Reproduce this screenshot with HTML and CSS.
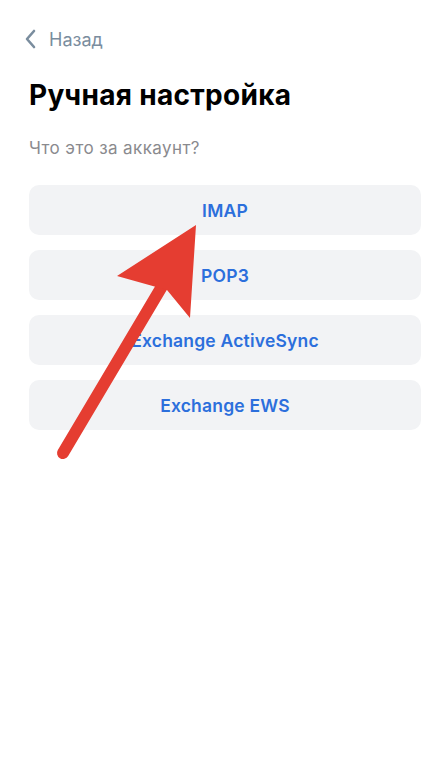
FILE: index.html
```html
<!DOCTYPE html>
<html lang="ru">
<head>
    <meta charset="UTF-8">
    <meta name="viewport" content="width=device-width, initial-scale=1.0">
    <title>Ручная настройка</title>
    <link rel="stylesheet" href="styles.css">
</head>
<body>
    <div class="screen">
        <a class="back" href="#">
            <svg class="back-icon" width="12" height="20" viewBox="0 0 12 20">
                <path d="M10 2 L3 10 L10 18" fill="none" stroke="currentColor" stroke-width="2.6" stroke-linecap="round" stroke-linejoin="round"/>
            </svg>
            <span>Назад</span>
        </a>

        <h1 class="title">Ручная настройка</h1>
        <p class="subtitle">Что это за аккаунт?</p>

        <div class="options">
            <button class="option">IMAP</button>
            <button class="option">POP3</button>
            <button class="option">Exchange ActiveSync</button>
            <button class="option">Exchange EWS</button>
        </div>

        <!-- стрелка-подсказка поверх кнопок -->
        <svg class="hint-arrow" width="445" height="774" viewBox="0 0 445 774">
            <line x1="63" y1="453" x2="164" y2="283" stroke="#e53d31" stroke-width="12" stroke-linecap="round"/>
            <polygon points="196,225 190,318 167,290 117,276" fill="#e53d31"/>
        </svg>
    </div>
</body>
</html>
```

FILE: styles.css
```css
body {
    margin: 0;
    background: #ffffff;
    font-family: Inter, "Liberation Sans", Arial, sans-serif;
}

.screen {
    position: relative;
    width: 445px;
    height: 774px;
    padding: 26px 24px 0 29px;
    box-sizing: border-box;
}

.back {
    display: flex;
    align-items: center;
    gap: 13px;
    margin-left: -5px;
    height: 26px;
    color: #7a8d9e;
    text-decoration: none;
    font-size: 18px;
}

.back-icon {
    display: block;
}

.title {
    margin: 26px 0 0;
    font-size: 28px;
    font-weight: 700;
    line-height: 34px;
    color: #000000;
    letter-spacing: 0.3px;
}

.subtitle {
    margin: 24px 0 0;
    font-size: 17px;
    line-height: 24px;
    color: #8a8a8e;
    letter-spacing: 0.4px;
}

.options {
    display: flex;
    flex-direction: column;
    gap: 15px;
    margin-top: 25px;
}

.option {
    height: 50px;
    border: none;
    border-radius: 10px;
    background: #f2f3f5;
    color: #2c6fdc;
    font-family: Inter, "Liberation Sans", Arial, sans-serif;
    font-size: 17.5px;
    font-weight: 600;
    letter-spacing: 0.2px;
    cursor: pointer;
}

.hint-arrow {
    position: absolute;
    left: 0;
    top: 0;
    pointer-events: none;
}
```
